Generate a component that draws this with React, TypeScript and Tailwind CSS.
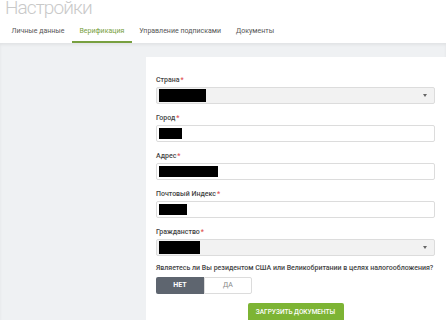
import React from "react";

const tabs = ["Личные данные", "Верификация", "Управление подписками", "Документы"];

function Label({ text }: { text: string }) {
  return (
    <div className="h-[13px] leading-[13px] text-[7px] font-medium text-[#444]">
      {text}
      <span className="text-[#e05050] ml-[1px]">*</span>
    </div>
  );
}

function Select({ w }: { w: number }) {
  return (
    <div className="h-[17px] rounded-[2px] border border-[#dcdcdc] bg-[#f2f2f2] flex items-center px-[2px]">
      <div className="h-[13px] bg-black" style={{ width: w }} />
      <div className="ml-auto mr-[5px] w-0 h-0 border-l-[2px] border-r-[2px] border-t-[3px] border-l-transparent border-r-transparent border-t-[#666]" />
    </div>
  );
}

function Input({ w }: { w: number }) {
  return (
    <div className="h-[17px] rounded-[2px] border border-[#dcdcdc] bg-white flex items-center px-[2px]">
      <div className="h-[11px] bg-black" style={{ width: w }} />
    </div>
  );
}

export default function App() {
  return (
    <div className="w-[446px] h-[320px] overflow-hidden bg-white flex flex-col font-['Roboto',sans-serif]">
      <div className="h-[20px] shrink-0 overflow-hidden pl-[5px]">
        <div className="text-[19px] leading-none font-light tracking-[-0.9px] text-[#c9c9c9] -mt-[2px]">Настройки</div>
      </div>

      <div className="h-[23px] shrink-0 flex items-stretch pl-[4px]">
        {tabs.map((t, i) => (
          <div
            key={t}
            className={
              "px-[7.5px] flex items-center text-[7px] " +
              (i === 1
                ? "text-[#78a040] border-b-2 border-[#78a040] pt-[2px]"
                : "text-[#555]")
            }
          >
            {t}
          </div>
        ))}
      </div>

      <div className="flex-1 flex bg-[#eff1f3] shadow-[inset_0_2px_3px_rgba(0,0,0,0.06)] pt-[14px]">
        <div className="w-[146px] shrink-0" />
        <div className="flex-1 min-w-0 bg-white pt-[17px] pl-[10px] pr-[11px]">
          <Label text="Страна" />
          <Select w={47} />

          <div className="mt-[8px]">
            <Label text="Город" />
            <Input w={23} />
          </div>

          <div className="mt-[8px]">
            <Label text="Адрес" />
            <Input w={59} />
          </div>

          <div className="mt-[8px]">
            <Label text="Почтовый Индекс" />
            <Input w={28} />
          </div>

          <div className="mt-[8px]">
            <Label text="Гражданство" />
            <Select w={41} />
          </div>

          <div className="mt-[6px] h-[12px] leading-[12px] text-[7px] font-medium text-[#444] whitespace-nowrap">
            Являетесь ли Вы резидентом США или Великобритании в целях налогообложения?
          </div>

          <div className="mt-[3px] flex">
            <div className="w-[48px] h-[17px] bg-[#5e656f] rounded-l-[2px] flex items-center justify-center text-[7px] font-bold text-white">
              НЕТ
            </div>
            <div className="w-[48px] h-[17px] bg-white border border-[#dcdcdc] rounded-r-[2px] flex items-center justify-center text-[7px] text-[#888]">
              ДА
            </div>
          </div>

          <div className="mt-[9px] flex justify-center">
            <div className="w-[96px] h-[20px] bg-[#7db434] rounded-[2px] flex items-center justify-center text-[6.5px] font-medium text-white uppercase">
              Загрузить документы
            </div>
          </div>
        </div>
      </div>
    </div>
  );
}
